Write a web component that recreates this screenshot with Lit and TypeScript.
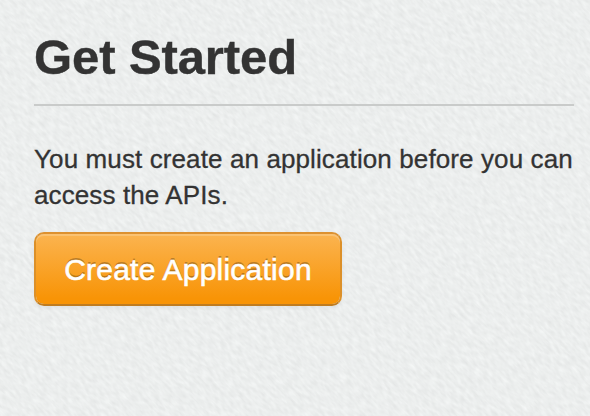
import { LitElement, html, css } from "lit";
import { customElement } from "lit/decorators.js";

@customElement("app-root")
export class AppRoot extends LitElement {
  static styles = css`
    :host {
      display: block;
      position: relative;
      box-sizing: border-box;
      height: 416px;
      overflow: hidden;
      padding: 20px 16px 0 34px;
      background: #ebeded;
      color: #333;
      font-family: "Liberation Sans", Arial, sans-serif;
    }
    .paper {
      position: absolute;
      left: -105px;
      top: -192px;
      width: 800px;
      height: 800px;
      transform: rotate(45deg);
    }
    .content {
      position: relative;
    }
    h1 {
      margin: 0;
      height: 84px;
      border-bottom: 2px solid #c9cbca;
      font-size: 49px;
      line-height: 75px;
      font-weight: 700;
      letter-spacing: -0.1px;
      -webkit-text-stroke: 0.4px;
    }
    p {
      margin: 35px 0 19px;
      font-size: 26px;
      line-height: 36px;
      letter-spacing: 0.11px;
      white-space: nowrap;
      -webkit-text-stroke: 0.3px;
    }
    button {
      display: block;
      box-sizing: border-box;
      width: 308px;
      height: 74px;
      padding: 2px 0 0;
      border: 2px solid;
      border-color: #dd9130 #dc9029 #bf7c20;
      border-radius: 10px;
      background: linear-gradient(#fbb450, #f89406 92%) padding-box;
      box-shadow:
        inset 0 2px 0 rgba(255, 255, 255, 0.2),
        0 2px 4px rgba(0, 0, 0, 0.05);
      color: #fff;
      font: 30px "Liberation Sans", Arial, sans-serif;
      letter-spacing: 0.23px;
      white-space: nowrap;
      text-shadow: 0 -2px 0 rgba(0, 0, 0, 0.25);
      -webkit-text-stroke: 0.6px;
    }
  `;

  render() {
    return html`
      <svg class="paper" aria-hidden="true">
        <filter id="grain" x="0" y="0" width="100%" height="100%" color-interpolation-filters="sRGB">
          <feTurbulence type="fractalNoise" baseFrequency="0.12 0.32" numOctaves="3" seed="7" />
          <feColorMatrix
            values="0.09 0 0 0 0.879  0.09 0 0 0 0.888  0.09 0 0 0 0.886  0 0 0 0 1"
          />
        </filter>
        <rect width="800" height="800" filter="url(#grain)" />
      </svg>
      <main class="content">
        <h1>Get Started</h1>
        <p>You must create an application before you can<br />access the APIs.</p>
        <button type="button">Create Application</button>
      </main>
    `;
  }
}
